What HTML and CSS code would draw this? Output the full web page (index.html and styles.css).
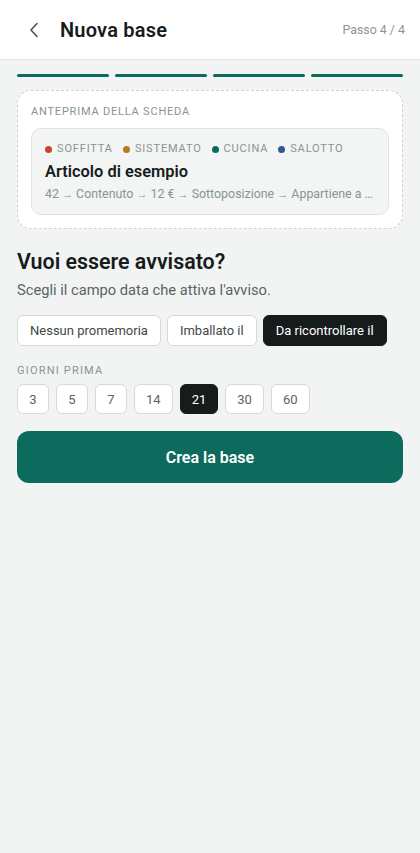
FILE: index.html
```html
<!DOCTYPE html>
<html lang="it">
<head>
<meta charset="utf-8">
<link rel="stylesheet" href="styles.css">
</head>
<body>
<header class="topbar">
  <button class="back" aria-label="Indietro">
    <svg width="10" height="16" viewBox="0 0 10 16"><path d="M8 1.5 L2 8 L8 14.5" fill="none" stroke="#4a5350" stroke-width="1.6" stroke-linecap="round" stroke-linejoin="round"/></svg>
  </button>
  <h1 class="title">Nuova base</h1>
  <span class="step">Passo 4 / 4</span>
</header>
<main class="content">
  <div class="progress">
    <span class="seg"></span><span class="seg"></span><span class="seg"></span><span class="seg"></span>
  </div>
  <section class="preview">
    <div class="caps">ANTEPRIMA DELLA SCHEDA</div>
    <div class="item">
      <div class="tags">
        <span class="tag"><i class="dot red"></i>SOFFITTA</span>
        <span class="tag"><i class="dot amber"></i>SISTEMATO</span>
        <span class="tag"><i class="dot teal"></i>CUCINA</span>
        <span class="tag"><i class="dot blue"></i>SALOTTO</span>
      </div>
      <div class="item-title">Articolo di esempio</div>
      <div class="meta">42 <span class="arr">→</span> Contenuto <span class="arr">→</span> 12 € <span class="arr">→</span> Sottoposizione <span class="arr">→</span> Appartiene a …</div>
    </div>
  </section>
  <h2 class="heading">Vuoi essere avvisato?</h2>
  <p class="sub">Scegli il campo data che attiva l'avviso.</p>
  <div class="options">
    <button class="opt">Nessun promemoria</button>
    <button class="opt">Imballato il</button>
    <button class="opt selected">Da ricontrollare il</button>
  </div>
  <div class="caps days-label">GIORNI PRIMA</div>
  <div class="days">
    <button class="day">3</button>
    <button class="day">5</button>
    <button class="day">7</button>
    <button class="day">14</button>
    <button class="day selected">21</button>
    <button class="day">30</button>
    <button class="day">60</button>
  </div>
  <button class="create">Crea la base</button>
</main>
</body>
</html>
```
FILE: styles.css
```css
* { box-sizing: border-box; }
html, body { margin: 0; padding: 0; }
body {
  font-family: Roboto, "Noto Sans", Arial, sans-serif;
  background: #f2f4f3;
  color: #161c1b;
  width: 420px;
  min-height: 853px;
}
.topbar {
  height: 60px;
  background: #ffffff;
  border-bottom: 1px solid #e2e6e4;
  display: flex;
  align-items: center;
  padding: 0 15px 0 20px;
}
.back {
  width: 28px;
  height: 28px;
  border: 0;
  background: none;
  padding: 0;
  display: flex;
  align-items: center;
  justify-content: center;
  margin-right: 12px;
}
.title {
  margin: 0;
  font-size: 20px;
  font-weight: 600;
  color: #161c1b;
  flex: 1;
  letter-spacing: 0.2px;
}
.step {
  font-size: 12.4px;
  color: #8d9693;
}
.content {
  padding: 14px 17px 0 17px;
}
.progress {
  display: flex;
  gap: 6px;
}
.seg {
  flex: 1;
  height: 3px;
  border-radius: 2px;
  background: #0d6b5e;
}
.preview {
  margin-top: 13px;
  background: #ffffff;
  border: 1px dashed #cdd3d0;
  border-radius: 14px;
  padding: 14px 13px 13px 13px;
}
.caps {
  font-size: 11px;
  line-height: 14px;
  letter-spacing: 0.8px;
  color: #8a9491;
}
.item {
  margin-top: 9px;
  background: #f3f5f4;
  border: 1px solid #dfe3e1;
  border-radius: 10px;
  padding: 12px 13px 10px 13px;
}
.tags {
  display: flex;
  gap: 10px;
  line-height: 16px;
}
.tag {
  display: flex;
  align-items: center;
  font-size: 11px;
  letter-spacing: 0.85px;
  color: #8a9491;
}
.dot {
  width: 7px;
  height: 7px;
  border-radius: 50%;
  margin-right: 5px;
  display: inline-block;
}
.red { background: #c7452c; }
.amber { background: #b87b1c; }
.teal { background: #0d6b5e; }
.blue { background: #2e5a8d; }
.item-title {
  margin-top: 4px;
  font-size: 16.4px;
  line-height: 22px;
  font-weight: 600;
  color: #161c1b;
}
.meta {
  margin-top: 2px;
  font-size: 12.4px;
  line-height: 18px;
  color: #8a9491;
  white-space: nowrap;
}
.arr {
  font-size: 11px;
}
.heading {
  margin: 19px 0 0 0;
  font-size: 21.4px;
  line-height: 28px;
  font-weight: 600;
  color: #161c1b;
}
.sub {
  margin: 4px 0 0 0;
  font-size: 14.7px;
  line-height: 20px;
  color: #5b6461;
}
.options {
  margin-top: 15px;
  display: flex;
  gap: 6px;
}
.opt {
  height: 31px;
  padding: 0 12px;
  font-family: inherit;
  font-size: 13px;
  background: #ffffff;
  color: #3f4846;
  border: 1px solid #d5dad8;
  border-radius: 6px;
}
.opt.selected, .day.selected {
  background: #161c1b;
  border-color: #161c1b;
  color: #ffffff;
}
.days-label {
  margin-top: 18px;
  letter-spacing: 1.2px;
}
.days {
  margin-top: 6px;
  display: flex;
  gap: 7px;
}
.day {
  height: 30px;
  min-width: 32px;
  padding: 0 11px;
  font-family: inherit;
  font-size: 13px;
  background: #ffffff;
  color: #5b6461;
  border: 1px solid #d5dad8;
  border-radius: 6px;
}
.create {
  margin-top: 17px;
  width: 100%;
  height: 52px;
  border: 0;
  border-radius: 12px;
  background: #0d6b5e;
  color: #ffffff;
  font-family: inherit;
  font-size: 16px;
  font-weight: 600;
}
```
